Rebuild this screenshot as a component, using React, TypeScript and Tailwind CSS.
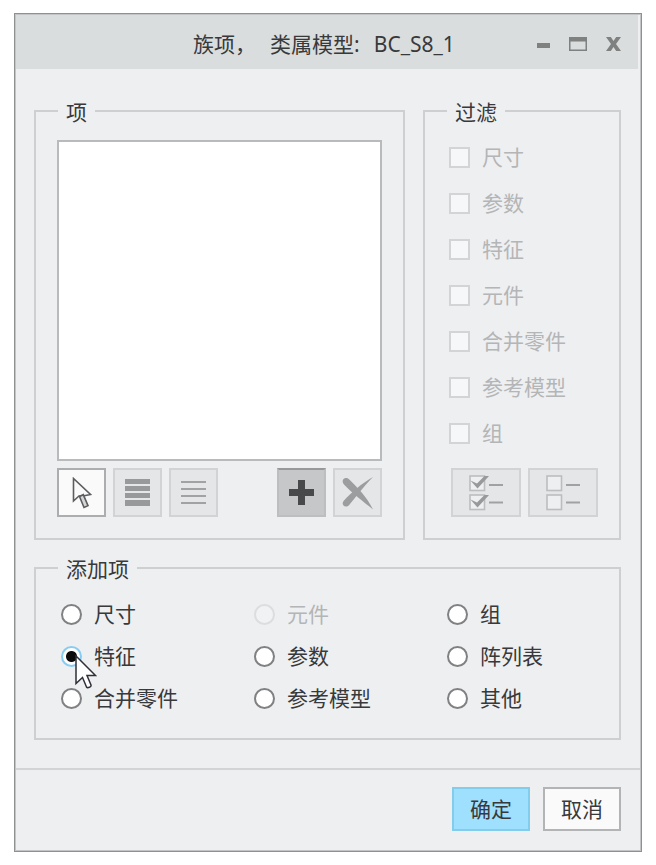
/**
 * Family Items Dialog
 * Lets the user pick which items to add to a generic model's family table
 */

import { useState, type ReactNode } from "react";
import { clsx } from "clsx";

interface Option {
  id: string;
  label: string;
  disabled?: boolean;
}

const FILTERS: Option[] = [
  { id: "dimension", label: "尺寸" },
  { id: "parameter", label: "参数" },
  { id: "feature", label: "特征" },
  { id: "component", label: "元件" },
  { id: "merge-part", label: "合并零件" },
  { id: "reference-model", label: "参考模型" },
  { id: "group", label: "组" },
];

const ITEM_TYPES: Option[] = [
  { id: "dimension", label: "尺寸" },
  { id: "component", label: "元件", disabled: true },
  { id: "group", label: "组" },
  { id: "feature", label: "特征" },
  { id: "parameter", label: "参数" },
  { id: "pattern-table", label: "阵列表" },
  { id: "merge-part", label: "合并零件" },
  { id: "reference-model", label: "参考模型" },
  { id: "other", label: "其他" },
];

interface GroupBoxProps {
  title: string;
  className?: string;
  bodyClassName: string;
  children: ReactNode;
}

function GroupBox({ title, className, bodyClassName, children }: GroupBoxProps) {
  return (
    <fieldset className={clsx("min-w-0 border-2 border-[#cecfd1]", className)}>
      <legend className="ml-[22px] px-2 pt-0.5 leading-[22px]">{title}</legend>
      <div className={bodyClassName}>{children}</div>
    </fieldset>
  );
}

interface ToolButtonProps {
  label: string;
  className: string;
  disabled?: boolean;
  children: ReactNode;
}

function ToolButton({ label, className, disabled, children }: ToolButtonProps) {
  return (
    <button
      type="button"
      aria-label={label}
      disabled={disabled}
      className={clsx("flex h-[49px] items-center justify-center border-2", className)}
    >
      {children}
    </button>
  );
}

function WindowControls() {
  return (
    <div className="flex items-center gap-[19px] justify-self-end pt-1 text-[#7f8080]">
      <button type="button" aria-label="最小化">
        <svg className="block" width="13" height="16" viewBox="0 0 13 16" fill="currentColor">
          <rect y="7" width="13" height="5" />
        </svg>
      </button>
      <button type="button" aria-label="最大化">
        <svg className="block" width="18" height="16" viewBox="0 0 18 16" fill="currentColor">
          <path d="M0 1h18v14H0zM1.500 5.500v8h15v-8z" fillRule="evenodd" />
        </svg>
      </button>
      <button type="button" aria-label="关闭">
        <svg className="block" width="15" height="16" viewBox="0 0 15 16" fill="currentColor">
          <path d="M0 1h4.800l2.700 4L10.200 1H15L10 8l5 7h-4.800L7.500 11 4.800 15H0l5-7z" />
        </svg>
      </button>
    </div>
  );
}

function ChecklistIcon({ checked }: { checked?: boolean }) {
  return (
    <svg width="34" height="36" viewBox="0 0 34 36" fill="none">
      {[1, 20].map((y) => (
        <g key={y}>
          <rect x="1" y={y} width="14.500" height="14.500" fill="#eeeff0" stroke="#bcbdbe" strokeWidth="1.600" />
          {checked && (
            <path
              d={`M1.500 ${y + 4.5}L8 ${y + 7.500} 15.500 ${y}h4.500L8.500 ${y + 12.500}z`}
              fill="#98999a"
            />
          )}
        </g>
      ))}
      <path d="M20 10h14M20 27.500h14" stroke="#a0a1a2" strokeWidth="2" />
    </svg>
  );
}

export default function App() {
  const [itemType, setItemType] = useState("feature");

  return (
    <main className="min-h-screen bg-white px-[14px] py-[13px] font-['Noto_Sans','Noto_Sans_CJK_SC',sans-serif] text-[21px] text-[#38393b]">
      <div className="border border-[#8f9090] bg-[#c3c4c5] p-px">
        <div className="bg-[#eeeff1]">
          <header className="mr-0.5 grid h-[54px] grid-cols-[1fr_auto_1fr] items-center bg-[#dadddd] pr-[17px] pl-[11px]">
            <h1 className="col-start-2 flex gap-[14px] pt-1 leading-6 whitespace-nowrap">
              <span>族项，</span>
              <span>类属模型:</span>
              <span>BC_S8_1</span>
            </h1>
            <WindowControls />
          </header>

          <div className="flex flex-col gap-4 pt-[30px] pr-[19px] pb-7 pl-[18px]">
            <div className="flex gap-[18px]">
              <GroupBox title="项" className="flex-1" bodyClassName="px-[21px] pt-[17px] pb-[21px]">
                <select
                  multiple
                  aria-label="项"
                  className="block h-[321px] w-full border-2 border-[#b9babb] bg-white"
                />
                <div className="mt-[7px] flex gap-[7px]">
                  <ToolButton label="选择" className="w-[49px] border-[#acadae] bg-[#fafafb]">
                    <svg width="20" height="32" viewBox="0 0 20 32" fill="none">
                      <g stroke="#5c5d5e" strokeWidth="1.600">
                        <path d="M1.500 1.500V24L7 19h4l7.500-1.500z" fill="#fafafb" />
                        <path d="M7.500 19.500l4.500 11 4-1.800-4.700-11z" fill="#d5d6d7" />
                      </g>
                    </svg>
                  </ToolButton>
                  <ToolButton label="全选" disabled className="w-[49px] border-[#d2d3d4] bg-[#e5e6e8]">
                    <svg width="25" height="27" viewBox="0 0 25 27" fill="#98999a">
                      <path d="M0 0h25v5H0zM0 7h25v5H0zM0 14h25v5H0zM0 21h25v6H0z" />
                    </svg>
                  </ToolButton>
                  <ToolButton label="取消全选" disabled className="w-[49px] border-[#d2d3d4] bg-[#e5e6e8]">
                    <svg width="25" height="27" viewBox="0 0 25 27" fill="#a1a2a3">
                      <path d="M0 2h25v2H0zM0 9h25v2H0zM0 16h25v2H0zM0 23h25v2H0z" />
                    </svg>
                  </ToolButton>
                  <ToolButton
                    label="添加"
                    className="ml-auto w-[49px] border-[#bdbebf] border-t-[#979899] bg-[#c6c7c9]"
                  >
                    <svg width="25" height="25" viewBox="0 0 25 25" fill="#48494b">
                      <path d="M9 0h7v9h9v7h-9v9H9v-9H0V9h9z" />
                    </svg>
                  </ToolButton>
                  <ToolButton label="移除" disabled className="w-[49px] border-[#d2d3d4] bg-[#e5e6e8]">
                    <svg width="32" height="34" viewBox="0 0 32 34" fill="#9c9d9e">
                      <path d="M1.500 3c1.500-1.500 4-1.200 5.500.3C15 11 25 21 31 33.500 22 26 10 17 2 8.500 .3 6.500.2 4.500 1.500 3z" />
                      <path d="M1.500 29.500c1.500 1.500 4 1.200 5.500-.3C14 21 21 11 31 1 20 7 9 17 2 24.500c-1.500 1.800-1.800 3.500-.5 5z" />
                    </svg>
                  </ToolButton>
                </div>
              </GroupBox>

              <GroupBox title="过滤" className="w-[198px] shrink-0" bodyClassName="px-6 pt-[11px]">
                {FILTERS.map((filter) => (
                  <label key={filter.id} className="flex h-[46px] items-center gap-3 text-[#b4b5b6]">
                    <input
                      type="checkbox"
                      disabled
                      className="size-[21px] shrink-0 appearance-none border-2 border-[#d3d4d5] bg-[#f6f7f8]"
                    />
                    <span className="pt-0.5 whitespace-nowrap">{filter.label}</span>
                  </label>
                ))}
                <div className="mt-3 ml-0.5 flex gap-[7px]">
                  <ToolButton label="全部选中" disabled className="w-[70px] shrink-0 border-[#d2d3d4] bg-[#e5e6e8]">
                    <ChecklistIcon checked />
                  </ToolButton>
                  <ToolButton label="全部清除" disabled className="w-[70px] shrink-0 border-[#d2d3d4] bg-[#e5e6e8]">
                    <ChecklistIcon />
                  </ToolButton>
                </div>
              </GroupBox>
            </div>

            <GroupBox title="添加项" bodyClassName="pt-[13px] pb-[19px] pl-[25px]">
              <div className="grid grid-cols-[1fr_1fr_172px]">
                {ITEM_TYPES.map((item) => (
                  <label
                    key={item.id}
                    className={clsx(
                      "relative flex h-[42px] items-center gap-3",
                      item.disabled && "text-[#b4b5b6]",
                    )}
                  >
                    <input
                      type="radio"
                      name="item-type"
                      value={item.id}
                      disabled={item.disabled}
                      checked={itemType === item.id}
                      onChange={() => setItemType(item.id)}
                      className="size-[21px] shrink-0 appearance-none rounded-full border-2 border-[#808182] bg-white checked:border-[#86cdf5] checked:bg-[radial-gradient(circle,#0c0c0c_5px,#ffffff_6px)] disabled:border-[#dcddde] disabled:bg-[#f1f2f3]"
                    />
                    <span className="pt-0.5 whitespace-nowrap">{item.label}</span>
                    {item.id === "feature" && (
                      <svg
                        className="pointer-events-none absolute top-5 left-[14px]"
                        width="22"
                        height="34"
                        viewBox="0 0 22 34"
                      >
                        <path
                          d="M1 1v27.500l6.500-6 4 9.500c1 1.500 5 0 4.500-2l-4-9.500h8.500z"
                          fill="#fff"
                          stroke="#2f2f38"
                          strokeWidth="1.500"
                        />
                      </svg>
                    )}
                  </label>
                ))}
              </div>
            </GroupBox>
          </div>

          <footer className="flex justify-end gap-[13px] border-t-2 border-[#d2d3d4] pt-[17px] pr-[19px] pb-[19px]">
            <button
              type="button"
              className="h-11 w-[78px] border-2 border-[#83cdec] bg-[#9fe0ff] leading-6"
            >
              确定
            </button>
            <button
              type="button"
              className="h-11 w-[78px] border-2 border-[#b3b4b5] bg-[#fafafa] leading-6"
            >
              取消
            </button>
          </footer>
        </div>
      </div>
    </main>
  );
}
